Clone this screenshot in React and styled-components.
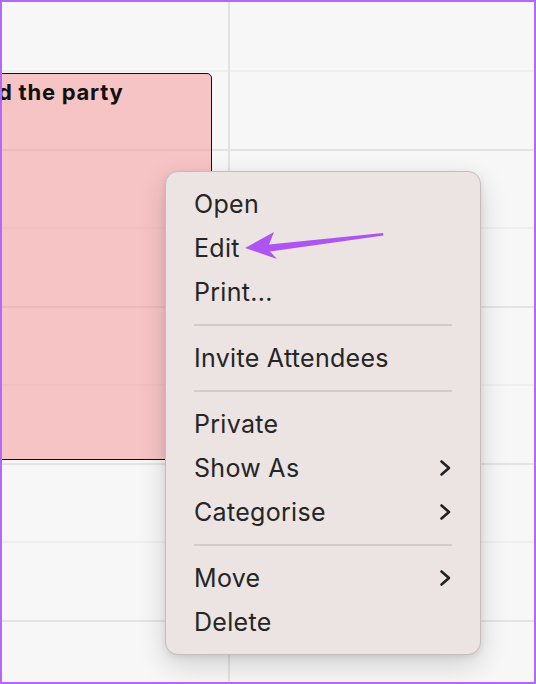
import styled, { createGlobalStyle } from "styled-components";

const GlobalStyle = createGlobalStyle`
  html, body {
    margin: 0;
    padding: 0;
    background: #f7f7f7;
  }
  * {
    box-sizing: border-box;
  }
`;

const Frame = styled.div`
  position: relative;
  width: 536px;
  height: 684px;
  border: 2px solid #b368f7;
  background: #f7f7f7;
  overflow: hidden;
  font-family: Inter, "Liberation Sans", sans-serif;
`;

const Columns = styled.div`
  display: flex;
  height: 100%;
`;

const DayColumn = styled.div`
  position: relative;
  display: flex;
  flex-direction: column;
  width: ${(p) => p.width || "auto"};
  flex: ${(p) => (p.width ? "none" : "1")};
  border-right: ${(p) => (p.divider ? "2px solid #e2e2e2" : "none")};
`;

const Slot = styled.div`
  flex: none;
  height: ${(p) => p.height}px;
  border-bottom: 2px solid ${(p) => (p.hour ? "#e3e3e3" : "#efefef")};
`;

const Event = styled.div`
  position: absolute;
  top: 71px;
  left: -8px;
  width: 218px;
  height: 387px;
  background: rgba(247, 145, 147, 0.5);
  border: 1px solid #111;
  border-radius: 0 5px 0 0;
  overflow: hidden;
`;

const EventTitle = styled.div`
  margin: 5px 0 0 0;
  padding-left: 3px;
  font-size: 22px;
  font-weight: 700;
  letter-spacing: 0.75px;
  color: #111;
  white-space: nowrap;
`;

const Menu = styled.div`
  position: absolute;
  top: 169px;
  left: 163px;
  width: 316px;
  height: 484px;
  padding: 10px 28px 11px 28px;
  background: #ebe4e3;
  border: 1px solid #c3bdbc;
  border-radius: 13px;
  box-shadow: 0 10px 28px rgba(0, 0, 0, 0.16), 0 2px 6px rgba(0, 0, 0, 0.08);
  display: flex;
  flex-direction: column;
`;

const Item = styled.div`
  display: flex;
  align-items: center;
  justify-content: space-between;
  height: 44px;
  font-size: 25px;
  color: #252525;
  letter-spacing: 0.3px;
`;

const Separator = styled.div`
  height: 2px;
  margin: 10px 0 10px;
  background: #d2cbca;
`;

const Arrow = styled.svg`
  position: absolute;
  top: 0;
  left: 0;
  pointer-events: none;
`;

function Chevron() {
  return (
    <svg width="13" height="18" viewBox="0 0 13 18">
      <polyline
        points="2.5,2.5 10,9 2.5,15.5"
        fill="none"
        stroke="#222"
        strokeWidth="2.6"
        strokeLinecap="round"
        strokeLinejoin="round"
      />
    </svg>
  );
}

const groups = [
  [{ label: "Open" }, { label: "Edit" }, { label: "Print..." }],
  [{ label: "Invite Attendees" }],
  [{ label: "Private" }, { label: "Show As", sub: true }, { label: "Categorise", sub: true }],
  [{ label: "Move", sub: true }, { label: "Delete" }],
];

function Slots() {
  const heights = [70, 78.5, 78.5, 78.5, 78.5, 78.5, 78.5, 78.5, 78.5];
  return heights.map((h, i) => <Slot key={i} height={h} hour={i % 2 === 1} />);
}

export default function App() {
  return (
    <>
      <GlobalStyle />
      <Frame>
        <Columns>
          <DayColumn width="228px" divider>
            <Slots />
            <Event>
              <EventTitle>d the party</EventTitle>
            </Event>
          </DayColumn>
          <DayColumn>
            <Slots />
          </DayColumn>
        </Columns>
        <Menu>
          {groups.map((group, gi) => (
            <div key={gi}>
              {gi > 0 && <Separator />}
              {group.map((item) => (
                <Item key={item.label}>
                  <span>{item.label}</span>
                  {item.sub && <Chevron />}
                </Item>
              ))}
            </div>
          ))}
        </Menu>
        <Arrow width="536" height="684" viewBox="0 0 536 684">
          <path
            d="M243 246 L272 230 L267 242.5 L381 231 L381.5 233.5 L268 249.5 L275 257 Z"
            fill="#ad54f2"
            strokeLinejoin="round"
          />
        </Arrow>
      </Frame>
    </>
  );
}
